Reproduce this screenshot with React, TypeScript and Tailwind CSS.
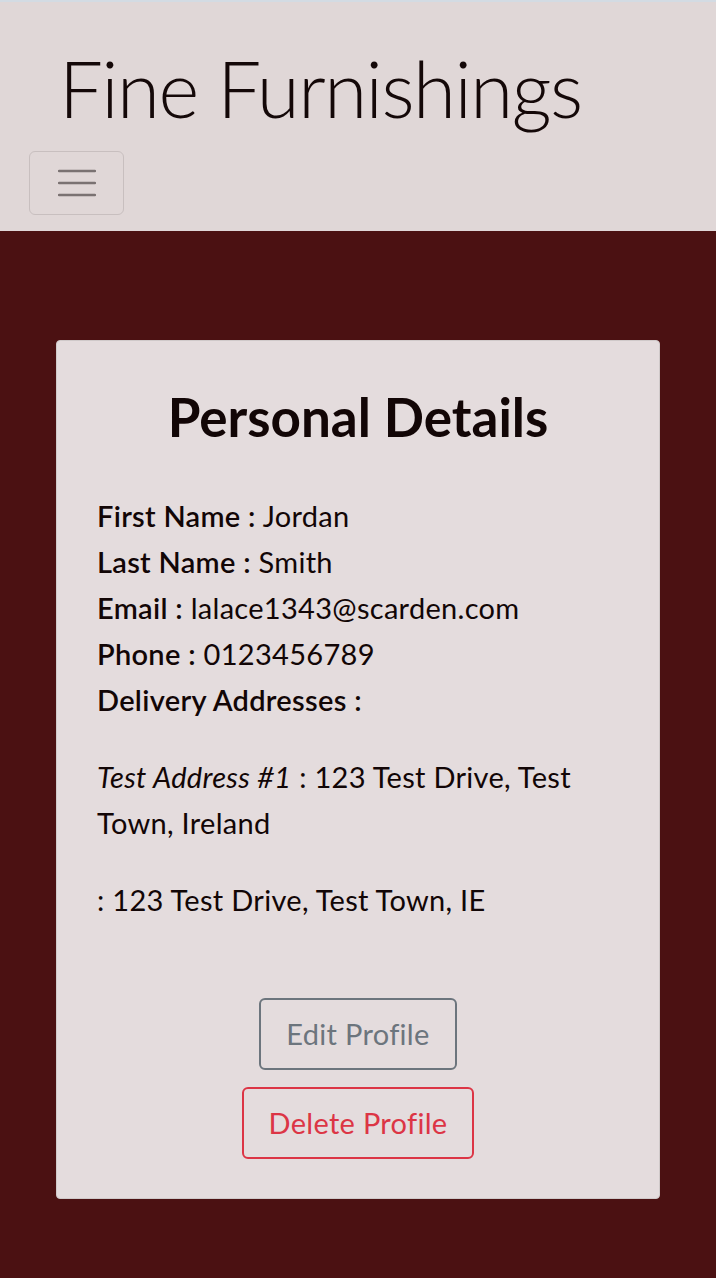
const bodyFont = "font-['Lato',sans-serif]";

const Row = ({ label, value }: { label: string; value?: string }) => (
  <p className="leading-[46px]">
    <span className="font-semibold">{label} :</span>
    {value ? ` ${value}` : ''}
  </p>
);

export default function App() {
  return (
    <div className={`min-h-[1278px] bg-[#4b1112] ${bodyFont}`}>
      <header className="border-t-2 border-[#d3dbe3] bg-[#e0d7d7] px-[29px] pb-[16px] pt-[36px]">
        <h1 className="pl-[30px] font-['Lato',sans-serif] text-[78px] font-light leading-[100px] tracking-[-1.5px] text-[#140808]">
          Fine Furnishings
        </h1>
        <button
          className="mt-[13px] flex h-[64px] w-[95px] items-center justify-center rounded-md border border-[#c8bfbf]"
          aria-label="Toggle navigation"
        >
          <svg width="38" height="30" viewBox="0 0 38 30">
            <path d="M1 3h36M1 15h36M1 27h36" stroke="#7a7272" strokeWidth="2.5" strokeLinecap="round" />
          </svg>
        </button>
      </header>

      <main className="px-[56px] pb-[81px] pt-[109px]">
        <section className="rounded border border-[#cfc9c9] bg-[#e4dcdd] px-[40px] pb-[39px] pt-[36px] text-[29px] tracking-[0.3px] text-[#120606]">
          <h2 className="text-center text-[53px] font-bold leading-[80px] tracking-normal">Personal Details</h2>
          <div className="mt-[36px]">
            <Row label="First Name" value="Jordan" />
            <Row label="Last Name" value="Smith" />
            <Row label="Email" value="lalace1343@scarden.com" />
            <Row label="Phone" value="0123456789" />
            <Row label="Delivery Addresses" />
          </div>
          <p className="mt-[31px] leading-[46px]">
            <em>Test Address #1</em> : 123 Test Drive, Test Town, Ireland
          </p>
          <p className="mt-[31px] leading-[46px]">: 123 Test Drive, Test Town, IE</p>
          <div className="mt-[75px] flex flex-col items-center gap-[17px]">
            <button className="h-[72px] rounded-md border-2 border-[#6c757d] px-[25px] text-[#6c757d]">
              Edit Profile
            </button>
            <button className="h-[72px] rounded-md border-2 border-[#dc3545] px-[25px] text-[#dc3545]">
              Delete Profile
            </button>
          </div>
        </section>
      </main>
    </div>
  );
}
